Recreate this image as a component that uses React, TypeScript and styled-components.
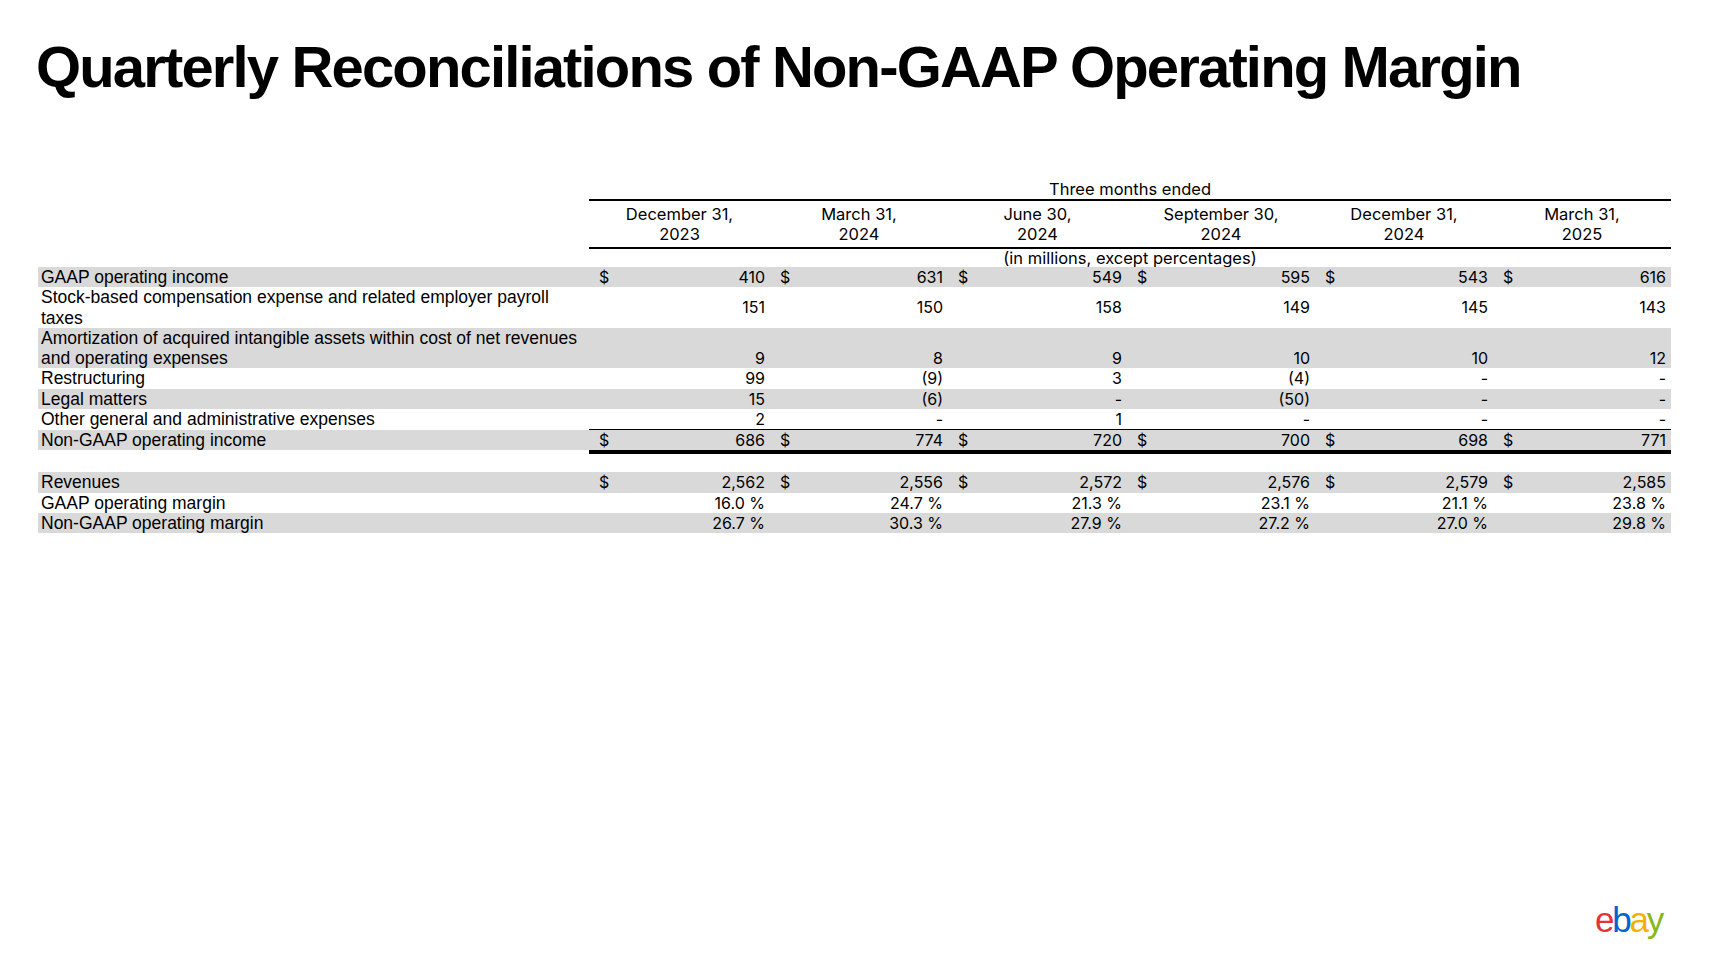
import React from 'react'
import styled, { createGlobalStyle } from 'styled-components'

const GlobalStyle = createGlobalStyle`
  html, body {
    margin: 0;
    padding: 0;
    background: #ffffff;
  }
`

const COLS = '551px 181px 178px 179px 188px 178px 178px'
const SHADE = '#d9d9d9'

const Slide = styled.div`
  width: 1726px;
  height: 965px;
  box-sizing: border-box;
  padding: 38px 36px 0 36px;
  display: flex;
  flex-direction: column;
  color: #000;
  font-family: 'Liberation Sans', Arial, sans-serif;
  overflow: hidden;
`

const Title = styled.h1`
  margin: 0;
  font-size: 58px;
  line-height: 58px;
  font-weight: 700;
  letter-spacing: -1.85px;
  white-space: nowrap;
`

const Table = styled.div`
  margin: 83px 0 0 2px;
  width: 1633px;
  display: flex;
  flex-direction: column;
`

const Row = styled.div<{ $shade?: boolean; $valign?: string }>`
  display: grid;
  grid-template-columns: ${COLS};
  align-items: ${(p) => p.$valign || 'center'};
  background: ${(p) => (p.$shade ? SHADE : 'transparent')};
`

const HeadRow = styled.div<{ $pad?: number; $lh?: number }>`
  display: grid;
  grid-template-columns: ${COLS};
  padding: ${(p) => p.$pad || 0}px 0;
  line-height: ${(p) => p.$lh || 20}px;
  font-family: Inter, 'Liberation Sans', sans-serif;
  font-size: 16.5px;
`

const SpanHead = styled.div`
  grid-column: 2 / -1;
  text-align: center;
`

const DateHead = styled.div`
  text-align: center;
`

const Rule = styled.div<{ $weight: number }>`
  display: grid;
  grid-template-columns: ${COLS};

  &::after {
    content: '';
    grid-column: 2 / -1;
    height: ${(p) => p.$weight}px;
    background: #000;
  }
`

const Gap = styled.div`
  height: 18px;
`

const Label = styled.div`
  padding-left: 3px;
  font-size: 17.5px;
  line-height: 20.25px;
`

const Cell = styled.div`
  display: flex;
  justify-content: space-between;
  padding: 0 5px 0 10px;
  font-family: Inter, 'Liberation Sans', sans-serif;
  font-size: 16px;
  line-height: 20.25px;
  white-space: nowrap;
`

const Footer = styled.div`
  margin-top: auto;
  align-self: flex-end;
  padding: 0 28px 26px 0;
`

const Logo = styled.div`
  font-family: 'Liberation Sans', Arial, sans-serif;
  font-size: 35px;
  line-height: 38px;
  letter-spacing: -2.2px;
`

const LogoLetter = styled.span<{ $color: string }>`
  color: ${(p) => p.$color};
`

type Line = {
  label: React.ReactNode
  values: string[]
  dollar?: boolean
  shade?: boolean
  valign?: string
}

const periods = [
  ['December 31,', '2023'],
  ['March 31,', '2024'],
  ['June 30,', '2024'],
  ['September 30,', '2024'],
  ['December 31,', '2024'],
  ['March 31,', '2025'],
]

const income: Line[] = [
  { label: 'GAAP operating income', values: ['410', '631', '549', '595', '543', '616'], dollar: true, shade: true },
  {
    label: (
      <>
        Stock-based compensation expense and related employer payroll
        <br />
        taxes
      </>
    ),
    values: ['151', '150', '158', '149', '145', '143'],
  },
  {
    label: (
      <>
        Amortization of acquired intangible assets within cost of net revenues
        <br />
        and operating expenses
      </>
    ),
    values: ['9', '8', '9', '10', '10', '12'],
    shade: true,
    valign: 'end',
  },
  { label: 'Restructuring', values: ['99', '(9)', '3', '(4)', '-', '-'] },
  { label: 'Legal matters', values: ['15', '(6)', '-', '(50)', '-', '-'], shade: true },
  { label: 'Other general and administrative expenses', values: ['2', '-', '1', '-', '-', '-'] },
]

const total: Line = {
  label: 'Non-GAAP operating income',
  values: ['686', '774', '720', '700', '698', '771'],
  dollar: true,
  shade: true,
}

const margins: Line[] = [
  { label: 'Revenues', values: ['2,562', '2,556', '2,572', '2,576', '2,579', '2,585'], dollar: true, shade: true },
  { label: 'GAAP operating margin', values: ['16.0 %', '24.7 %', '21.3 %', '23.1 %', '21.1 %', '23.8 %'] },
  { label: 'Non-GAAP operating margin', values: ['26.7 %', '30.3 %', '27.9 %', '27.2 %', '27.0 %', '29.8 %'], shade: true },
]

const DataRow = ({ line }: { line: Line }) => (
  <Row $shade={line.shade} $valign={line.valign}>
    <Label>{line.label}</Label>
    {line.values.map((v, i) => (
      <Cell key={i}>
        <span>{line.dollar ? '$' : ''}</span>
        <span>{v}</span>
      </Cell>
    ))}
  </Row>
)

export default function App() {
  return (
    <Slide>
      <GlobalStyle />
      <Title>Quarterly Reconciliations of Non-GAAP Operating Margin</Title>
      <Table>
        <HeadRow>
          <SpanHead>Three months ended</SpanHead>
        </HeadRow>
        <Rule $weight={2} />
        <HeadRow $pad={3}>
          <div />
          {periods.map((p, i) => (
            <DateHead key={i}>
              {p[0]}
              <br />
              {p[1]}
            </DateHead>
          ))}
        </HeadRow>
        <Rule $weight={2} />
        <HeadRow $lh={18}>
          <SpanHead>(in millions, except percentages)</SpanHead>
        </HeadRow>
        {income.map((line, i) => (
          <DataRow key={i} line={line} />
        ))}
        <Rule $weight={1} />
        <DataRow line={total} />
        <Rule $weight={4} />
        <Gap />
        {margins.map((line, i) => (
          <DataRow key={i} line={line} />
        ))}
      </Table>
      <Footer>
        <Logo>
          <LogoLetter $color="#e53238">e</LogoLetter>
          <LogoLetter $color="#0064d2">b</LogoLetter>
          <LogoLetter $color="#f5af02">a</LogoLetter>
          <LogoLetter $color="#86b817">y</LogoLetter>
        </Logo>
      </Footer>
    </Slide>
  )
}
